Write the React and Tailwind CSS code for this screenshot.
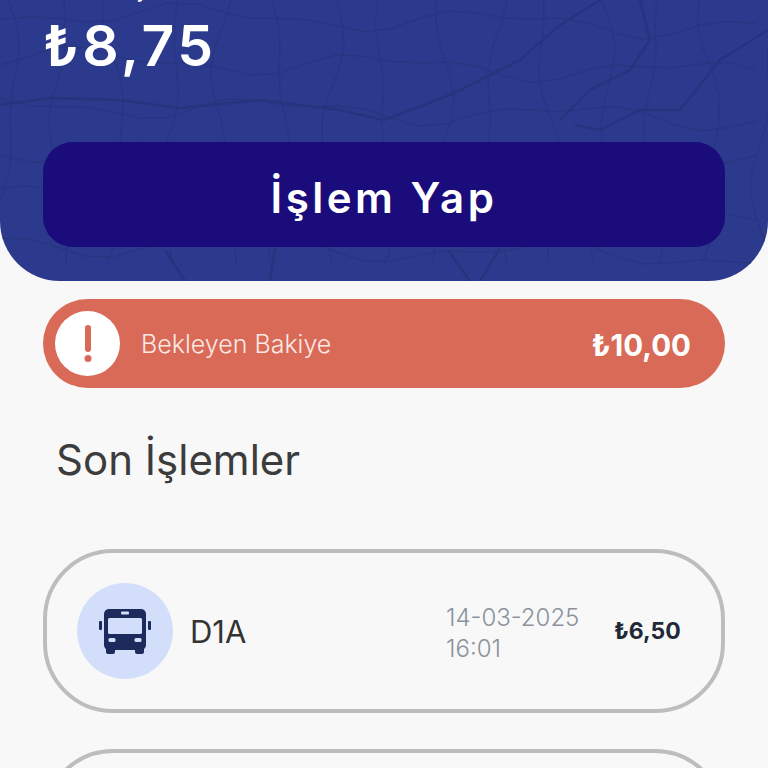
import React from 'react'

// wobbly street grid for the header background
const wobble = (i, t) => Math.sin(i * 2.3 + t * 0.021) * 9 + Math.sin(i * 5.1 + t * 0.047) * 5

const streets = []
for (let i = 0; i < 15; i++) {
  let d = ''
  for (let y = 0; y <= 285; y += 24) {
    d += `${d ? 'L' : 'M'}${(i * 54 + 8 + wobble(i, y)).toFixed(1)} ${y} `
  }
  streets.push(d)
}
for (let i = 0; i < 7; i++) {
  let d = ''
  for (let x = 0; x <= 770; x += 28) {
    d += `${d ? 'L' : 'M'}${x} ${(i * 46 + 12 + wobble(i + 3, x) + x * 0.02).toFixed(1)} `
  }
  streets.push(d)
}

const mainRoads = [
  'M384 120 L450 95 L520 60 L560 25 L600 0',
  'M768 30 L720 60 L680 110 L640 110 L600 130 L575 125',
  'M560 120 L590 90 L630 70 L650 40 L640 0',
  'M0 105 L50 98 L120 100 L180 108 L260 100 L340 110 L384 120',
  'M165 250 L185 281',
  'M448 250 L470 281',
  'M500 248 L480 281',
  'M275 248 L270 281',
]

const Bus = () => (
  <svg width="52" height="45" viewBox="0 0 52 45">
    <rect x="0" y="12" width="3" height="9" rx="1" fill="#1d2a5c" />
    <rect x="49" y="12" width="3" height="9" rx="1" fill="#1d2a5c" />
    <rect x="5" y="0" width="42" height="41" rx="5" fill="#1d2a5c" />
    <rect x="7" y="38" width="9" height="7" rx="2" fill="#1d2a5c" />
    <rect x="36" y="38" width="9" height="7" rx="2" fill="#1d2a5c" />
    <rect x="9" y="9" width="34" height="16" rx="1.5" fill="#d3dffa" />
    <rect x="22" y="2.5" width="8" height="3" rx="1" fill="#d3dffa" />
    <rect x="9.5" y="29" width="7" height="4" rx="1.5" fill="#d3dffa" />
    <rect x="35.5" y="29" width="7" height="4" rx="1.5" fill="#d3dffa" />
  </svg>
)

const App = () => {
  return (
    <div className="h-screen overflow-hidden bg-[#f8f8f8] font-['Inter',sans-serif]">
      <div className="relative h-[281px] overflow-hidden rounded-b-[60px] bg-[#2b3a8c] px-[43px]">
        <svg className="absolute inset-0" width="768" height="281" viewBox="0 0 768 281" fill="none" stroke="#283682" strokeWidth="1.5">
          {streets.map((d) => <path key={d} d={d} />)}
          {mainRoads.map((d) => <path key={d} d={d} strokeWidth="2.5" stroke="#26347f" />)}
        </svg>
        <div className="relative">
          <p className="mt-[-24px] h-[26px] text-[22px] leading-[26px] text-white">Kart Bakiyesi</p>
          <p className="mt-[9px] h-[70px] text-[57px] leading-[70px] font-semibold tracking-[3.5px] text-white">₺8,75</p>
          <button className="mt-[61px] flex h-[105px] w-full items-center justify-center rounded-[30px] bg-[#1a0c7a] pt-[5px] text-[42px] font-semibold tracking-[3.5px] text-white">
            İşlem Yap
          </button>
        </div>
      </div>

      <div className="px-[43px]">
        <div className="mt-[18px] flex h-[89px] items-center rounded-full bg-[#d96a58] pr-[34px] pl-[12px]">
          <div className="flex h-[65px] w-[65px] items-center justify-center rounded-full bg-white">
            <svg width="10" height="38" viewBox="0 0 10 38">
              <rect x="2" y="0" width="6" height="27" rx="3" fill="#d96a58" />
              <circle cx="5" cy="33.5" r="3.5" fill="#d96a58" />
            </svg>
          </div>
          <span className="ml-[21px] pt-[3px] text-[25px] font-light text-[#fbe9e5]">Bekleyen Bakiye</span>
          <span className="ml-auto pt-[3px] text-[29.5px] font-bold text-white">₺10,00</span>
        </div>

        <h2 className="mt-[42px] ml-[13px] h-[60px] text-[42px] leading-[60px] text-[#3c3c3c]">Son İşlemler</h2>

        <div className="mt-[59px] flex h-[164px] items-center rounded-[70px] border-4 border-[#bdbdbd] pl-[30px]">
          <div className="flex h-[96px] w-[96px] items-center justify-center rounded-full bg-[#d3dffa]">
            <Bus />
          </div>
          <span className="ml-[17px] w-[256px] pt-[3px] text-[31px] text-[#333333]">D1A</span>
          <div className="w-[168px] pt-[3px] text-[24px] leading-[31px] font-light text-[#8b929c]">
            <p>14-03-2025</p>
            <p>16:01</p>
          </div>
          <span className="text-[23px] font-bold text-[#1f2937]">₺6,50</span>
        </div>

        <div className="mt-[36px] h-[164px] rounded-[70px] border-4 border-[#bdbdbd]" />
      </div>
    </div>
  )
}

export default App
